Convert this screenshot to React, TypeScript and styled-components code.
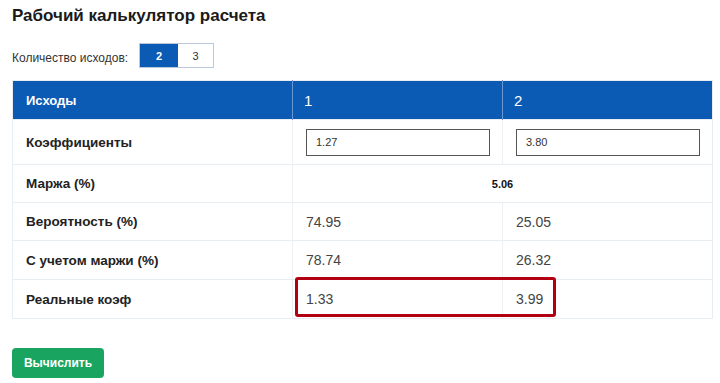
import React from "react";
import styled, { createGlobalStyle } from "styled-components";

const Global = createGlobalStyle`
  html, body { margin: 0; padding: 0; background: #fff; }
  body { font-family: "Liberation Sans", Arial, sans-serif; color: #222; }
`;

const Page = styled.div`
  width: 700px;
  padding: 4px 8px 0 12px;
`;

const Title = styled.h1`
  margin: 0;
  font-size: 17px;
  line-height: 24px;
  font-weight: bold;
  color: #1a1a1a;
`;

const Controls = styled.div`
  display: flex;
  align-items: center;
  margin-top: 15px;
  height: 25px;
`;

const Label = styled.span`
  font-size: 12px;
  color: #333;
  margin-top: 4px;
`;

const Toggle = styled.div`
  display: flex;
  margin-left: 11px;
  border: 1px solid #b9c8dc;
  height: 23px;
`;

const Seg = styled.button<{ $active?: boolean }>`
  width: ${(p) => (p.$active ? 38 : 35)}px;
  border: none;
  padding: 0;
  font-family: inherit;
  font-size: 11px;
  font-weight: ${(p) => (p.$active ? "bold" : "normal")};
  background: ${(p) => (p.$active ? "#0b5ab4" : "#fff")};
  color: ${(p) => (p.$active ? "#fff" : "#333")};
`;

const TableWrap = styled.div`
  position: relative;
  margin-top: 12px;
  width: 700px;
`;

const Table = styled.table`
  width: 700px;
  border-collapse: collapse;
  table-layout: fixed;
  border: 1px solid #e8edf2;
`;

const HeadCell = styled.th<{ $big?: boolean }>`
  height: 38px;
  padding: 0 0 0 ${(p) => (p.$big ? 11 : 13)}px;
  background: #0b5ab4;
  color: #fff;
  text-align: left;
  font-size: ${(p) => (p.$big ? 15 : 13)}px;
  font-weight: ${(p) => (p.$big ? "normal" : "bold")};
  border-left: 1px solid #6a98d4;
  &:first-child { border-left: none; }
`;

const Row = styled.tr<{ $h: number }>`
  height: ${(p) => p.$h}px;
  border-top: 1px solid #e8edf2;
`;

const NameCell = styled.td`
  padding: 0 0 0 13px;
  font-size: 13.5px;
  font-weight: bold;
  color: #222;
`;

const ValCell = styled.td<{ $center?: boolean; $bold?: boolean }>`
  padding: 0 13px;
  font-size: ${(p) => (p.$bold ? 11 : 14)}px;
  font-weight: ${(p) => (p.$bold ? "bold" : "normal")};
  text-align: ${(p) => (p.$center ? "center" : "left")};
  color: ${(p) => (p.$bold ? "#111" : "#444")};
  border-left: 1px solid #eef1f4;
`;

const Input = styled.input`
  display: block;
  box-sizing: border-box;
  width: 184px;
  height: 27px;
  border: 1px solid #555;
  padding: 0 9px;
  font-family: inherit;
  font-size: 11px;
  color: #333;
  outline: none;
`;

const Highlight = styled.div`
  position: absolute;
  left: 283px;
  top: 197px;
  width: 261px;
  height: 40px;
  box-sizing: border-box;
  border: 3px solid #b00012;
  border-radius: 3px;
  pointer-events: none;
`;

const Button = styled.button`
  margin-top: 29px;
  width: 92px;
  height: 30px;
  border: none;
  border-radius: 4px;
  background: #19a55f;
  color: #fff;
  font-family: inherit;
  font-size: 12px;
  font-weight: bold;
`;

export default function App() {
  return (
    <Page>
      <Global />
      <Title>Рабочий калькулятор расчета</Title>
      <Controls>
        <Label>Количество исходов:</Label>
        <Toggle>
          <Seg $active>2</Seg>
          <Seg>3</Seg>
        </Toggle>
      </Controls>
      <TableWrap>
        <Table>
          <colgroup>
            <col style={{ width: 280 }} />
            <col style={{ width: 210 }} />
            <col style={{ width: 210 }} />
          </colgroup>
          <thead>
            <tr>
              <HeadCell>Исходы</HeadCell>
              <HeadCell $big>1</HeadCell>
              <HeadCell $big>2</HeadCell>
            </tr>
          </thead>
          <tbody>
            <Row $h={45}>
              <NameCell>Коэффициенты</NameCell>
              <ValCell><Input defaultValue="1.27" /></ValCell>
              <ValCell><Input defaultValue="3.80" /></ValCell>
            </Row>
            <Row $h={38}>
              <NameCell>Маржа (%)</NameCell>
              <ValCell colSpan={2} $center $bold>5.06</ValCell>
            </Row>
            <Row $h={38}>
              <NameCell>Вероятность (%)</NameCell>
              <ValCell>74.95</ValCell>
              <ValCell>25.05</ValCell>
            </Row>
            <Row $h={39}>
              <NameCell>С учетом маржи (%)</NameCell>
              <ValCell>78.74</ValCell>
              <ValCell>26.32</ValCell>
            </Row>
            <Row $h={39}>
              <NameCell>Реальные коэф</NameCell>
              <ValCell>1.33</ValCell>
              <ValCell>3.99</ValCell>
            </Row>
          </tbody>
        </Table>
        <Highlight />
      </TableWrap>
      <Button>Вычислить</Button>
    </Page>
  );
}
